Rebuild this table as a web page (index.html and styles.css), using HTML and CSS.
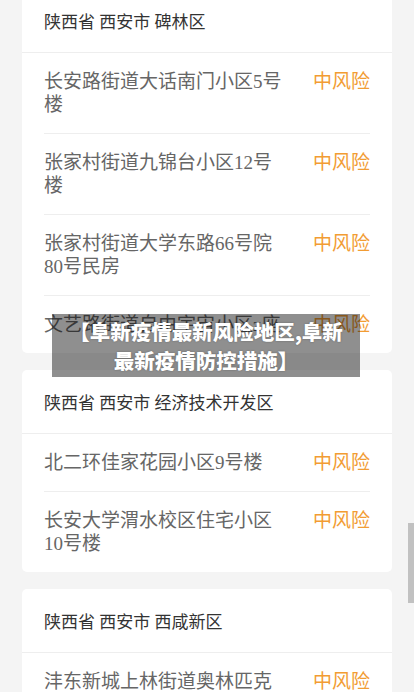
FILE: index.html
```html
<!DOCTYPE html>
<html lang="zh-CN">
<head>
    <meta charset="UTF-8">
    <meta name="viewport" content="width=device-width, initial-scale=1.0">
    <title>阜新疫情最新风险地区</title>
    <link rel="stylesheet" href="styles.css">
</head>
<body>
    <div class="list">
        <div class="card">
            <div class="card-head">陕西省 西安市 碑林区</div>
            <div class="item">
                <div class="name">长安路街道大话南门小区5号楼</div>
                <div class="level">中风险</div>
            </div>
            <div class="item">
                <div class="name">张家村街道九锦台小区12号楼</div>
                <div class="level">中风险</div>
            </div>
            <div class="item">
                <div class="name">张家村街道大学东路66号院80号民房</div>
                <div class="level">中风险</div>
            </div>
            <div class="item">
                <div class="name">文艺路街道自由宇宙小区z座</div>
                <div class="level">中风险</div>
            </div>
        </div>

        <div class="card">
            <div class="card-head">陕西省 西安市 经济技术开发区</div>
            <div class="item">
                <div class="name">北二环佳家花园小区9号楼</div>
                <div class="level">中风险</div>
            </div>
            <div class="item">
                <div class="name">长安大学渭水校区住宅小区10号楼</div>
                <div class="level">中风险</div>
            </div>
        </div>

        <div class="card">
            <div class="card-head">陕西省 西安市 西咸新区</div>
            <div class="item">
                <div class="name">沣东新城上林街道奥林匹克花园小区</div>
                <div class="level">中风险</div>
            </div>
        </div>
    </div>

    <div class="title-mask">【阜新疫情最新风险地区,阜新<br>最新疫情防控措施】</div>
    <div class="scroll-thumb"></div>
</body>
</html>
```

FILE: styles.css
```css
html, body {
    height: 100%;
    overflow: hidden;
}
body {
    margin: 0;
    padding: 0 22px;
    background-color: #f4f4f4;
    font-family: "Liberation Serif", "Noto Sans CJK SC", serif;
}
.list {
    margin-top: -11px;
}
.card {
    background-color: #fff;
    border-radius: 5px;
    margin-bottom: 17px;
}
.card-head {
    padding: 22px 22px 18px;
    font-size: 17px;
    line-height: 23px;
    color: #333;
    border-bottom: 1px solid #eee;
}
.item {
    display: flex;
    justify-content: space-between;
    align-items: flex-start;
    margin: 0 22px;
    padding: 17px 0;
    border-bottom: 1px solid #eee;
    font-size: 19px;
    line-height: 23px;
}
.item:last-child {
    border-bottom: none;
}
.name {
    width: 75%;
    color: #666;
}
.level {
    color: #f29c33;
    white-space: nowrap;
}
.title-mask {
    position: absolute;
    top: 314px;
    left: 52px;
    width: 308px;
    height: 63px;
    box-sizing: border-box;
    padding: 3px 0;
    background-color: rgba(0, 0, 0, 0.44);
    color: #fff;
    font-family: "Noto Sans CJK SC", sans-serif;
    font-weight: 900;
    font-size: 20.5px;
    line-height: 28.5px;
    text-align: center;
    white-space: nowrap;
    text-shadow: 0 0 2px rgba(0, 0, 0, 0.3);
}
.scroll-thumb {
    position: absolute;
    top: 523px;
    right: 0;
    width: 6px;
    height: 80px;
    background-color: #c1c1c1;
}
```
